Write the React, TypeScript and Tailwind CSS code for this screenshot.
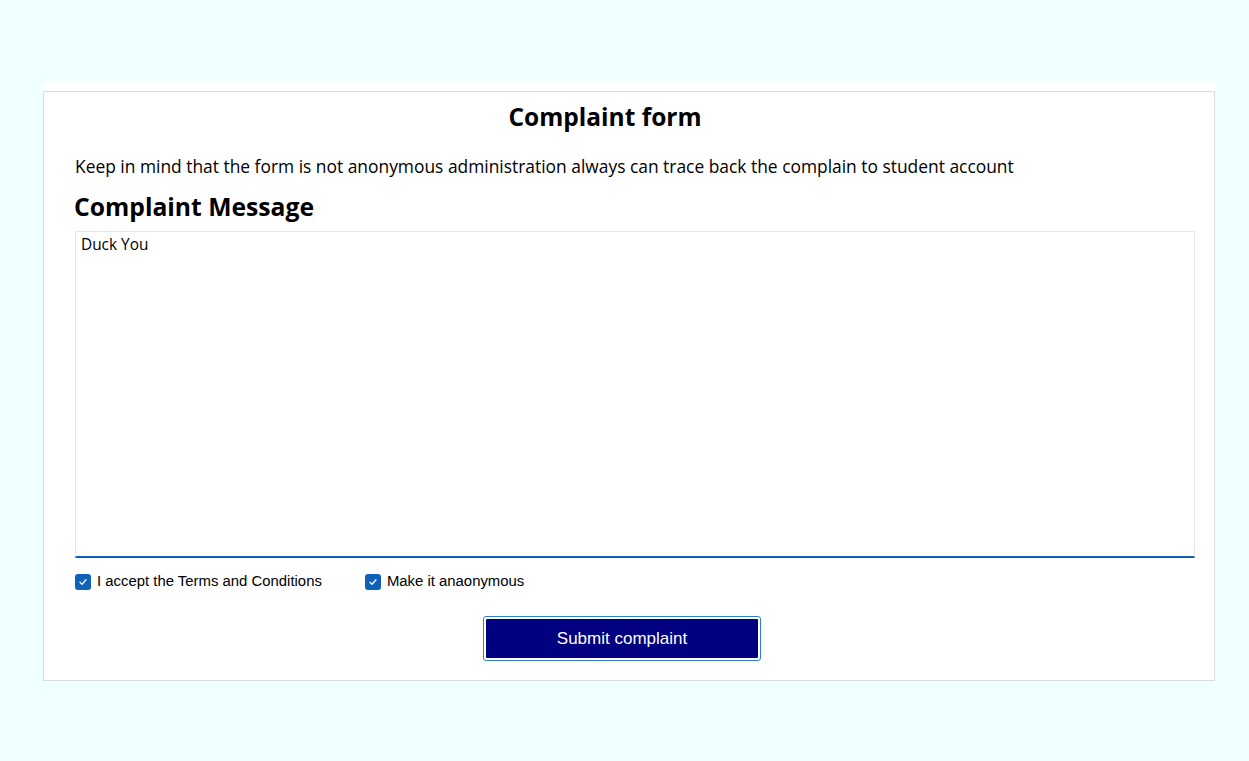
import { useState } from "react";

const segoe = { fontFamily: '"Open Sans", "Noto Sans", sans-serif' };
const arial = { fontFamily: '"Liberation Sans", Arial, sans-serif' };

function Check({ checked, onClick }: { checked: boolean; onClick: () => void }) {
  return (
    <button
      type="button"
      onClick={onClick}
      className={`flex items-center justify-center w-4 h-4 rounded-[3px] ${checked ? "bg-[#0f62b8]" : "bg-white border border-gray-500"}`}
    >
      {checked && (
        <svg width="10" height="10" viewBox="0 0 10 10" fill="none">
          <path d="M2 5.2 L4.1 7.2 L8 2.8" stroke="white" strokeWidth="1.3" strokeLinecap="round" strokeLinejoin="round" />
        </svg>
      )}
    </button>
  );
}

export default function App() {
  const [message, setMessage] = useState("Duck You");
  const [terms, setTerms] = useState(true);
  const [anon, setAnon] = useState(true);

  return (
    <div className="min-h-[761px] bg-[#f0ffff] pt-[81px]">
      <div className="ml-[43px] w-[1172px] bg-white pt-[10px]">
        <div className="border border-[#dcdcdc] pl-[31px] pr-[19px] pb-[19px]">
          <h1 className="w-[1060px] text-center text-[24.5px] font-bold text-black leading-[32px] mt-[9px]" style={segoe}>
            Complaint form
          </h1>
          <p className="text-[17.4px] text-black leading-[26px] mt-[20px]" style={segoe}>
            Keep in mind that the form is not anonymous administration always can trace back the complain to student account
          </p>
          <h2 className="text-[24.7px] font-bold text-black leading-[34px] mt-[11px] -ml-[1px]" style={segoe}>
            Complaint Message
          </h2>
          <textarea
            value={message}
            onChange={(e) => setMessage(e.target.value)}
            autoFocus
            className="block mt-[7px] w-[1120px] h-[327px] resize-none border border-[#e6e6e6] border-b-2 border-b-[#0f62b8] px-[5px] py-[3px] text-[15.4px] leading-[20px] text-black outline-none caret-black"
            style={segoe}
          />
          <div className="flex items-center mt-[15px] text-[14.9px] leading-[17px] text-black" style={arial}>
            <label className="flex items-center gap-[6px]">
              <Check checked={terms} onClick={() => setTerms(!terms)} />
              I accept the Terms and Conditions
            </label>
            <label className="flex items-center gap-[6px] ml-[43px]">
              <Check checked={anon} onClick={() => setAnon(!anon)} />
              Make it anaonymous
            </label>
          </div>
          <div className="flex justify-center pr-[26px] mt-[26px]">
            <button
              type="button"
              className="w-[278px] h-[45px] rounded-[3px] border border-[#2f7fd0] p-[2px]"
            >
              <span
                className="flex items-center justify-center w-full h-full bg-[#000080] text-white text-[17px] rounded-[1px]"
                style={arial}
              >
                Submit complaint
              </span>
            </button>
          </div>
        </div>
      </div>
    </div>
  );
}
